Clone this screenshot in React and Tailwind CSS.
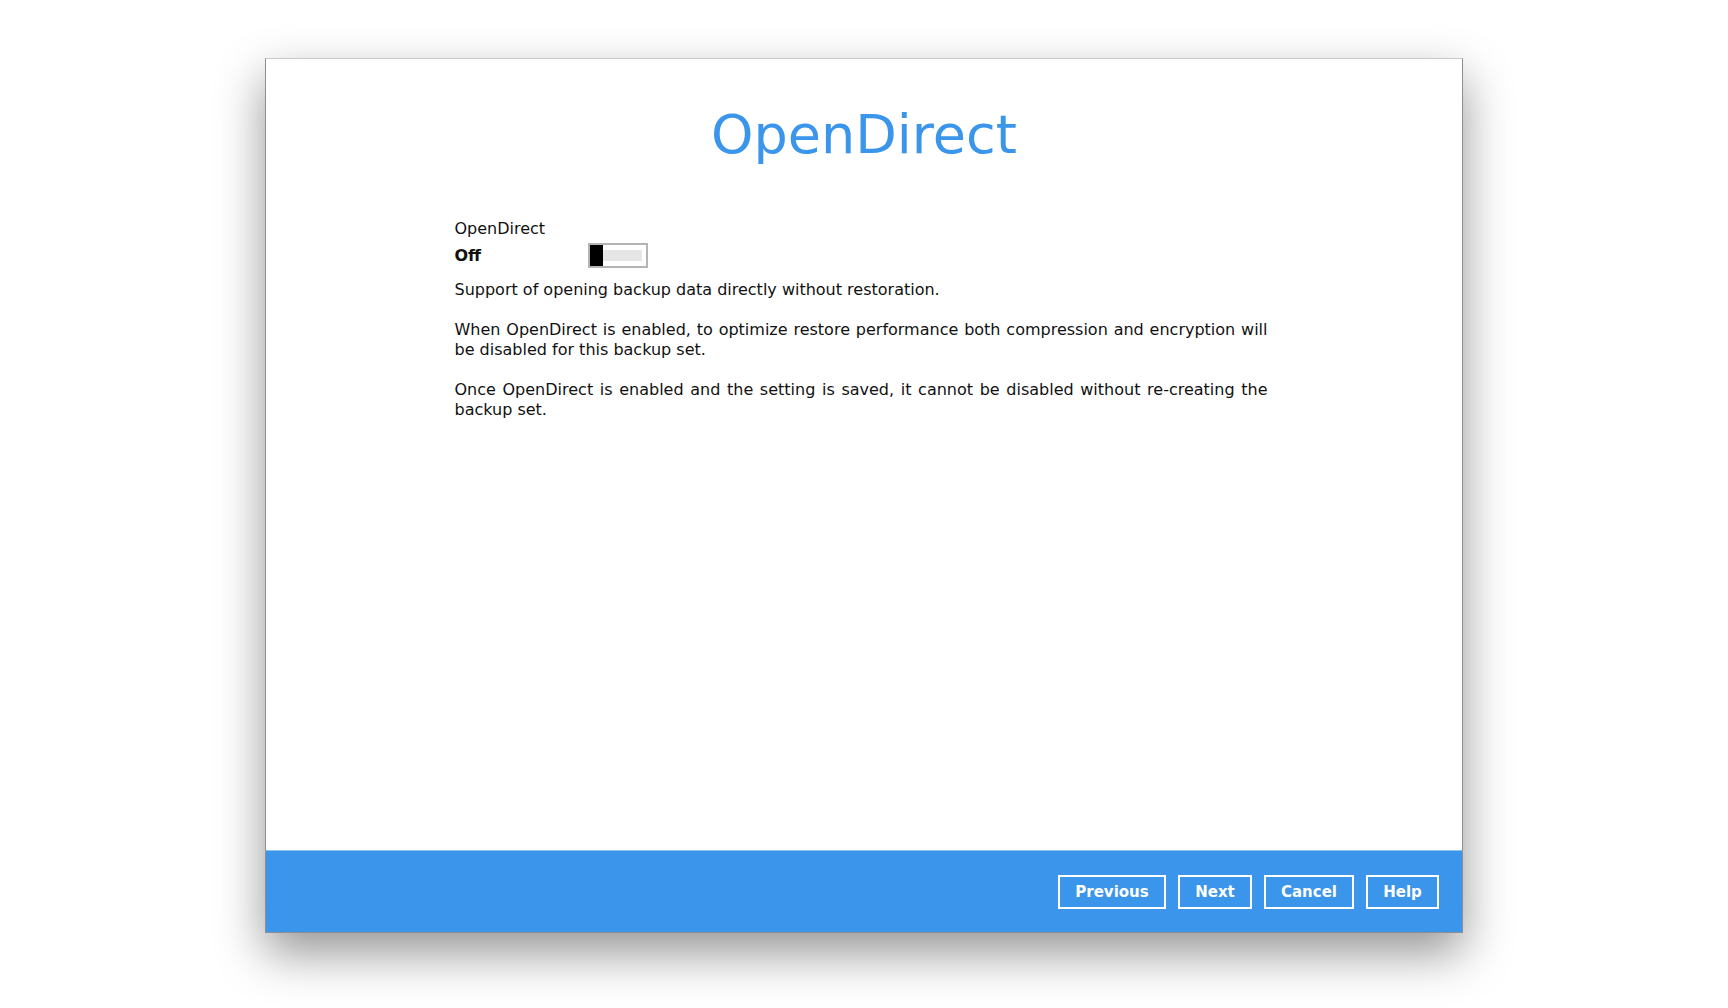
import React, { useState } from 'react';

const font = { fontFamily: '"DejaVu Sans", "Liberation Sans", sans-serif' };

// one visual line of justified text, stretched edge to edge
const JLine = ({ children }) => (
  <div className="text-justify [text-align-last:justify]">{children}</div>
);

const Toggle = ({ on, onChange }) => (
  <button
    onClick={() => onChange(!on)}
    className="flex h-[25px] w-[60px] items-stretch border-2 border-[#b4b4b4] bg-white"
  >
    <span className="w-[13px] bg-black" />
    <span className="my-[5px] ml-0 mr-[4px] flex-1 bg-[#e6e6e6]" />
  </button>
);

const FooterButton = ({ label, w }) => (
  <button
    className={`h-[34px] ${w} border-2 border-white pt-[1px] text-[15px] font-bold text-white`}
  >
    {label}
  </button>
);

export default function App() {
  const [on, setOn] = useState(false);

  return (
    <div className="flex h-[1008px] w-full justify-center bg-white pt-[58px]" style={font}>
      <div className="flex h-[875px] w-[1198px] flex-col border border-[#8e8e8e] border-t-[#c9c9c9] bg-white shadow-[0_20px_45px_rgba(0,0,0,0.42)]">
        {/* body */}
        <div className="flex flex-1 flex-col items-center">
          <h1 className="mt-[49px] text-[54px] font-normal leading-none text-[#3b95ea]">
            OpenDirect
          </h1>

          <div className="mr-[6px] mt-[57px] w-[813px] text-[16px] leading-[20px] text-[#111]">
            <div>OpenDirect</div>
            <div className="mt-[4px] flex items-center">
              <span className="w-[133px] font-bold">Off</span>
              <Toggle on={on} onChange={setOn} />
            </div>

            <p className="mt-[12px]">Support of opening backup data directly without restoration.</p>

            <div className="mt-[20px]">
              <JLine>
                When OpenDirect is enabled, to optimize restore performance both compression and encryption will
              </JLine>
              <div>be disabled for this backup set.</div>
            </div>

            <div className="mt-[20px]">
              <JLine>
                Once OpenDirect is enabled and the setting is saved, it cannot be disabled without re-creating the
              </JLine>
              <div>backup set.</div>
            </div>
          </div>
        </div>

        {/* footer bar */}
        <div className="flex h-[82px] items-center justify-end gap-[12px] border-t border-[#8fc2f1] bg-[#3a95eb] pr-[23px]">
          <FooterButton label="Previous" w="w-[108px]" />
          <FooterButton label="Next" w="w-[74px]" />
          <FooterButton label="Cancel" w="w-[90px]" />
          <FooterButton label="Help" w="w-[73px]" />
        </div>
      </div>
    </div>
  );
}
